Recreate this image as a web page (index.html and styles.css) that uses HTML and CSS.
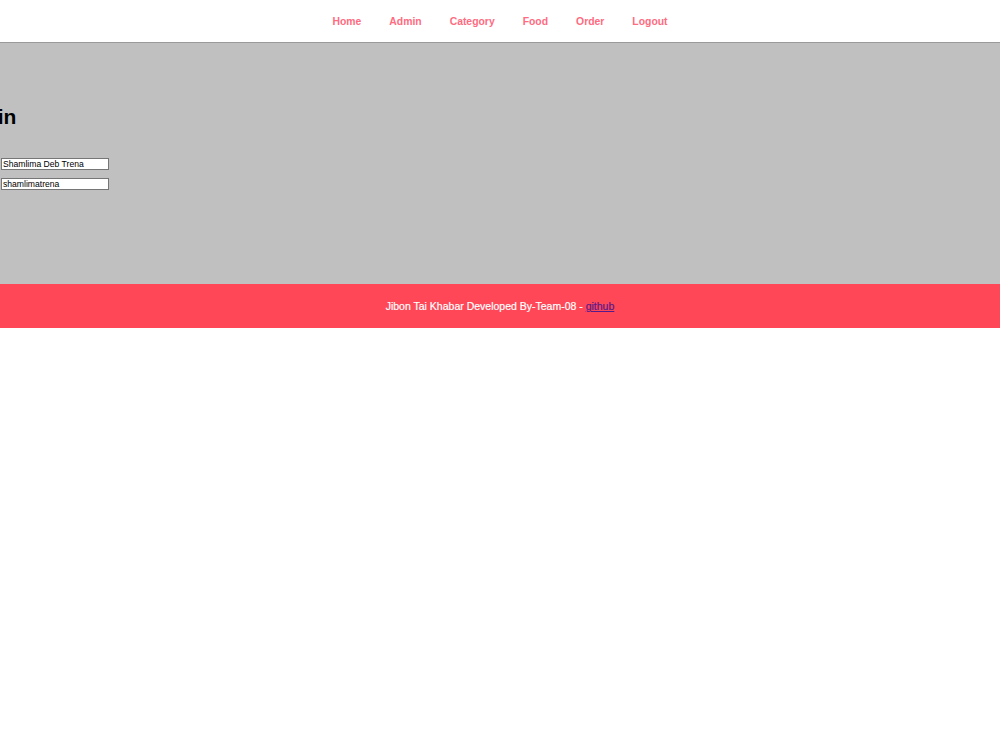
FILE: index.html
```html
<!DOCTYPE html>
<html lang="en">

<head>
    <meta charset="utf-8">
    <title>Jibon Tai Khabar - Admin</title>
    <meta name="viewport" content="width=device-width, initial-scale=1">
    <link rel="stylesheet" href="styles.css">
</head>

<body>
    <header class="topbar">
        <nav class="menu">
            <a href="#">Home</a>
            <a href="#">Admin</a>
            <a href="#">Category</a>
            <a href="#">Food</a>
            <a href="#">Order</a>
            <a href="#">Logout</a>
        </nav>
    </header>

    <section class="main">
        <h2 class="title">Admin</h2>
        <form class="admin-form">
            <input type="text" value="Shamlima Deb Trena">
            <input type="text" value="shamlimatrena">
        </form>
    </section>

    <footer class="footer">
        <p>Jibon Tai Khabar Developed By-Team-08 - <a href="#">github</a></p>
    </footer>
</body>

</html>
```

FILE: styles.css
```css
body {
    font-family: "Liberation Sans", Arial, sans-serif;
    margin: 0;
    padding: 0;
    background-color: #fff;
    color: #000;
}

.topbar {
    height: 42px;
    border-bottom: 1px solid #9a9a9a;
    background: #fff;
    display: flex;
    align-items: center;
    justify-content: center;
}

.menu {
    display: flex;
    gap: 28px;
}

.menu a {
    color: #ff6b81;
    font-size: 10.4px;
    font-weight: bold;
    text-decoration: none;
}

.main {
    background: #c0c0c0;
    height: 241px;
    box-sizing: border-box;
    padding-top: 62px;
    overflow: hidden;
}

.title {
    margin: 0 0 0 -49px;
    font-size: 21px;
    line-height: 24px;
}

.admin-form {
    display: flex;
    flex-direction: column;
    align-items: flex-start;
    gap: 8px;
    margin-top: 29px;
    padding-left: 1px;
}

.admin-form input {
    width: 108px;
    height: 12px;
    box-sizing: border-box;
    padding: 0 1px;
    margin: 0;
    border: 1px solid #767676;
    font-family: "Liberation Sans", Arial, sans-serif;
    font-size: 8.6px;
    background: #fff;
    color: #000;
}

.footer {
    background: #ff4757;
    height: 44px;
    display: flex;
    align-items: center;
    justify-content: center;
}

.footer p {
    margin: 0;
    color: #fff;
    font-size: 10.5px;
    -webkit-text-stroke: 0.2px #fff;
}

.footer a {
    color: #551a8b;
    -webkit-text-stroke: 0.2px #551a8b;
}
```
